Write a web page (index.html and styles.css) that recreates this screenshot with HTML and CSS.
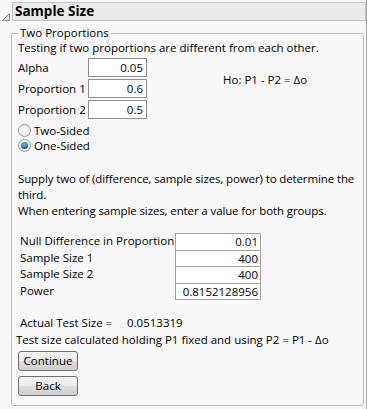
FILE: index.html
```html
<!DOCTYPE html>
<html lang="en">
<head>
    <meta charset="UTF-8">
    <title>Sample Size</title>
    <link rel="stylesheet" href="styles.css">
</head>
<body>
    <div class="report">
        <div class="head">
            <svg class="toggle" width="12" height="19" viewBox="0 0 12 19">
                <path d="M2.5 18.5 L9.5 18.5 L9.5 11.5 Z" fill="#e4e4e4" stroke="#8a8a8a" stroke-width="1"/>
            </svg>
            <div class="title">Sample Size</div>
        </div>

        <fieldset class="group">
            <legend>Two Proportions</legend>
            <p class="intro">Testing if two proportions are different from each other.</p>

            <div class="params">
                <div class="fields">
                    <div class="field"><span class="lbl">Alpha</span><span class="box">0.05</span></div>
                    <div class="field"><span class="lbl">Proportion 1</span><span class="box">0.6</span></div>
                    <div class="field"><span class="lbl">Proportion 2</span><span class="box">0.5</span></div>
                </div>
                <div class="hypo">Ho: P1 - P2 = Δo</div>
            </div>

            <div class="sides">
                <label class="radio"><span class="dot"></span>Two-Sided</label>
                <label class="radio"><span class="dot on"></span>One-Sided</label>
            </div>

            <p class="note">Supply two of (difference, sample sizes, power) to determine the<br>third.<br>When entering sample sizes, enter a value for both groups.</p>

            <div class="grid">
                <div class="row"><span class="lbl">Null Difference in Proportion</span><span class="cell">0.01</span></div>
                <div class="row"><span class="lbl">Sample Size 1</span><span class="cell">400</span></div>
                <div class="row"><span class="lbl">Sample Size 2</span><span class="cell">400</span></div>
                <div class="row"><span class="lbl">Power</span><span class="cell">0.8152128956</span></div>
            </div>

            <div class="actual"><span class="lbl">Actual Test Size =</span><span>0.0513319</span></div>
            <p class="calc">Test size calculated holding P1 fixed and using P2 = P1 - Δo</p>

            <div class="actions">
                <button type="button">Continue</button>
                <button type="button">Back</button>
            </div>
        </fieldset>
    </div>
</body>
</html>
```

FILE: styles.css
```css
:root {
    --bg: #f8f8f8;
    --title-bg: #ebebeb;
    --line: #c4c4c4;
    --box-line: #a3a3a3;
    --font-main: 'Open Sans', 'Noto Sans', sans-serif;
}
* {
    box-sizing: border-box;
    margin: 0;
    padding: 0;
}
body {
    background: var(--bg);
    font-family: var(--font-main);
    font-size: 11.5px;
    line-height: 16px;
    color: #000;
    white-space: nowrap;
}
.report {
    width: 367px;
    height: 409px;
    overflow: hidden;
    border-right: 1px solid #a9a9a9;
}
.head {
    display: flex;
    padding-top: 2px;
}
.toggle {
    flex: none;
}
.title {
    flex: 1;
    height: 19px;
    border: 1px solid var(--line);
    background: var(--title-bg);
    font-weight: bold;
    font-size: 13.5px;
    line-height: 17px;
    padding-left: 2px;
}
.group {
    margin: 4px 2px 0 11px;
    min-width: 0;
    border: 1px solid #bdbdbd;
    border-radius: 0 3px 3px 3px;
    padding: 0 6px 9px 6px;
}
.group legend {
    padding: 0 2px;
    line-height: 16px;
}
.intro {
    margin-top: -1px;
}
.params {
    display: flex;
    margin-top: 2px;
}
.fields {
    display: flex;
    flex-direction: column;
    gap: 2px;
}
.field {
    display: flex;
    align-items: center;
}
.field .lbl {
    flex: none;
    width: 70px;
}
.box {
    flex: none;
    width: 59px;
    height: 19px;
    border: 1px solid #8f8f8f;
    background: #fff;
    text-align: right;
    padding-right: 3px;
    line-height: 17px;
}
.hypo {
    margin: 14px 0 0 76px;
}
.sides {
    margin-top: 4px;
}
.radio {
    display: flex;
    align-items: center;
    height: 15px;
    gap: 3px;
}
.dot {
    flex: none;
    width: 13px;
    height: 13px;
    border-radius: 50%;
    border: 1px solid #9a9a9a;
    background: radial-gradient(circle at 50% 40%, #fdfdfd, #e0e0e0);
    display: flex;
    align-items: center;
    justify-content: center;
}
.dot.on::after {
    content: "";
    width: 7px;
    height: 7px;
    border-radius: 50%;
    background: radial-gradient(circle at 45% 35%, #6fc3f0, #1a6da6 60%, #0d4a78);
}
.note {
    margin-top: 18px;
    letter-spacing: -0.12px;
}
.grid {
    margin-top: 14px;
    padding-left: 2px;
}
.row {
    display: flex;
    height: 16.5px;
}
.row .lbl {
    flex: none;
    width: 155px;
    line-height: 16px;
}
.cell {
    flex: none;
    width: 86px;
    height: 17.5px;
    border: 1px solid var(--box-line);
    background: #fff;
    text-align: right;
    padding-right: 2px;
    line-height: 15px;
}
.actual {
    display: flex;
    margin-top: 16px;
    padding-left: 2px;
}
.actual .lbl {
    flex: none;
    width: 107px;
}
.calc {
    margin-top: 1px;
    margin-left: -2px;
}
.actions {
    display: flex;
    flex-direction: column;
    align-items: flex-start;
    gap: 5px;
    margin-top: 3px;
}
button {
    width: 60px;
    height: 20px;
    border: 1px solid #707070;
    border-radius: 3px;
    background: linear-gradient(#f3f3f3, #ebebeb 50%, #dddddd 50%, #cfcfcf);
    font-family: var(--font-main);
    font-size: 11.5px;
    color: #000;
    line-height: 16px;
}
```
